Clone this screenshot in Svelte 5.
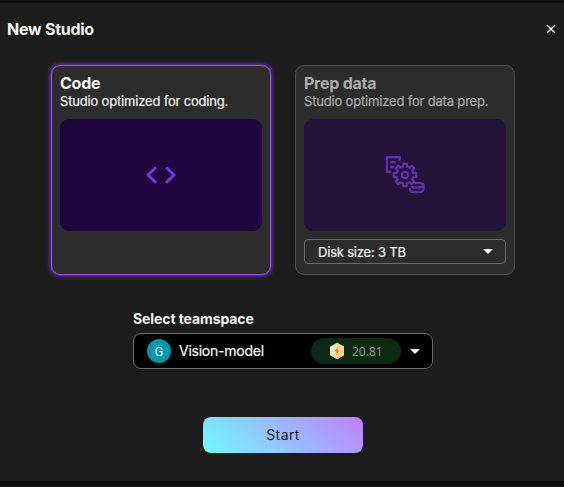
<script>
  const diskSize = '3 TB';
  const teamspace = { initial: 'G', name: 'Vision-model', credits: '20.81' };

  // Eight-toothed gear outline centred on (20, 20).
  const teeth = 8;
  const gear = Array.from({ length: teeth }, (_, i) => {
    const middle = (i * 2 * Math.PI) / teeth;
    return [[-0.24, 8.6], [-0.16, 11.4], [0.16, 11.4], [0.24, 8.6]]
      .map(([offset, r]) => `${(20 + r * Math.sin(middle + offset)).toFixed(2)} ${(20 - r * Math.cos(middle + offset)).toFixed(2)}`)
      .join('L');
  }).join('L');
</script>

<div class="screen">
  <section class="dialog">
    <header>
      <h1>New Studio</h1>
      <button class="close" aria-label="Close">
        <svg width="10" height="10" viewBox="0 0 10 10"><path d="M1 1l8 8M9 1L1 9" stroke="#fff" stroke-width="1.4" /></svg>
      </button>
    </header>

    <div class="cards">
      <article class="card selected">
        <h2>Code</h2>
        <p>Studio optimized for coding.</p>
        <div class="art">
          <svg width="30" height="18" viewBox="0 0 30 18" fill="none" stroke="#7a2fe8" stroke-width="3"><path d="M10 1.2L2.1 9l7.9 7.8M20 1.2L27.9 9 20 16.8" /></svg>
        </div>
      </article>

      <article class="card">
        <h2>Prep data</h2>
        <p>Studio optimized for data prep.</p>
        <div class="art dim">
          <svg width="40" height="40" viewBox="0 0 40 40" fill="none" stroke="#642db3" stroke-width="2.3">
            <path d="M6.5 16.8H2V2.1h12.6v4.2M5 7.2h5.6M5 12h3.8" />
            <path stroke-linejoin="round" d="M{gear}Z" />
            <circle cx="20" cy="20" r="3.1" />
            <path d="M29.5 28.1c5-.7 9 .2 9 2.1 0 2.6-8.3 3-12.2 1.6M38.5 30v4.7c0 3.6-13.4 3.6-13.4 0V33" />
          </svg>
        </div>
        <button class="disk"><span>Disk size: {diskSize}</span><i class="caret"></i></button>
      </article>
    </div>

    <div class="team">
      <label for="teamspace">Select teamspace</label>
      <button class="picker" id="teamspace">
        <span class="avatar">{teamspace.initial}</span>
        <span class="name">{teamspace.name}</span>
        <span class="credits">
          <svg width="16" height="18" viewBox="0 0 16 18">
            <path d="M8 .8l7 4v8.4l-7 4-7-4V4.8z" fill="#ffe2ad" />
            <path d="M8 .8l7 4v8.4l-7 4z" fill="#fcd596" />
            <path d="M8.6 5L5.6 9.5h1.9L7 13.2l3.2-4.8H8.3z" fill="#cf861f" />
          </svg>
          <span>{teamspace.credits}</span>
        </span>
        <i class="caret"></i>
      </button>
    </div>

    <button class="start">Start</button>
  </section>
</div>

<style>
  :global(body) { background: #0e0e0e; }
  .screen { box-sizing: border-box; height: 487px; padding-top: 3px; background: #0e0e0e; font-family: Inter, "Liberation Sans", sans-serif; color: #f5f5f5; overflow: hidden; }
  .dialog { height: 478px; background: #1c1c1c; display: flex; flex-direction: column; align-items: center; }
  h1, h2, p { margin: 0; white-space: nowrap; }
  button { font: inherit; color: inherit; border: 0; padding: 0; margin: 0; background: none; box-sizing: border-box; }
  svg { display: block; flex: none; }
  header { box-sizing: border-box; width: 100%; height: 62px; padding: 16px 8px 0 7px; display: flex; justify-content: space-between; align-items: flex-start; }
  h1 { font-size: 16px; line-height: 20px; font-weight: 700; letter-spacing: -.25px; }
  .close { padding-top: 5px; }
  .cards { display: flex; gap: 24px; padding-left: 2px; }
  .card { box-sizing: border-box; width: 220px; height: 210px; padding: 8px; border: 1px solid #505050; border-radius: 9px; background: #2c2c2c; color: #acacac; }
  .selected { border-color: #a255f5; color: #f5f5f5; box-shadow: 0 0 4px 1px #7030b8; }
  h2 { font-size: 16px; line-height: 18px; font-weight: 700; letter-spacing: -.25px; }
  p { font-size: 13px; line-height: 18px; letter-spacing: -.18px; -webkit-text-stroke: .2px currentColor; }
  .art { height: 112px; margin-top: 9px; border-radius: 9px; background: #1f063e; display: flex; align-items: center; justify-content: center; }
  .dim { background: #241239; }
  .disk { width: 202px; height: 25px; margin-top: 8px; padding: 0 12px 0 13px; border: 1px solid #6a6a6a; border-radius: 4px; color: #f0f0f0; font-size: 13px; letter-spacing: -.2px; -webkit-text-stroke: .2px currentColor; display: flex; align-items: center; justify-content: space-between; }
  .caret { width: 0; height: 0; border: 5px solid transparent; border-top-color: #fff; border-bottom: 0; }
  .team { width: 300px; margin-top: 35px; padding-left: 2px; }
  label { display: block; font-size: 14px; line-height: 18px; font-weight: 700; letter-spacing: -.09px; white-space: nowrap; }
  .picker { width: 300px; height: 36px; margin-top: 5px; padding: 0 12px 0 13px; border: 1px solid #6b6b6b; border-radius: 8px; background: #000; display: flex; align-items: center; }
  .avatar { width: 24px; height: 24px; border-radius: 50%; background: #0097a7; font-family: Roboto, sans-serif; font-size: 13px; line-height: 25px; text-align: center; }
  .name { margin-left: 8px; padding-bottom: 2px; font-size: 14px; letter-spacing: -.24px; -webkit-text-stroke: .2px currentColor; white-space: nowrap; }
  .credits { box-sizing: border-box; width: 90px; height: 26px; margin: 0 9px 0 auto; padding-left: 18px; border-radius: 13px; background: #0c2914; color: #8f9a94; font-family: "Noto Sans", sans-serif; font-size: 12px; display: flex; align-items: center; gap: 7px; }
  .start { width: 160px; height: 36px; margin-top: 48px; margin-left: 2px; padding-bottom: 1px; border-radius: 8px; background: linear-gradient(45deg, #70fbff, #c07fff); color: #1c1c1c; font-size: 14px; letter-spacing: .4px; }
</style>
